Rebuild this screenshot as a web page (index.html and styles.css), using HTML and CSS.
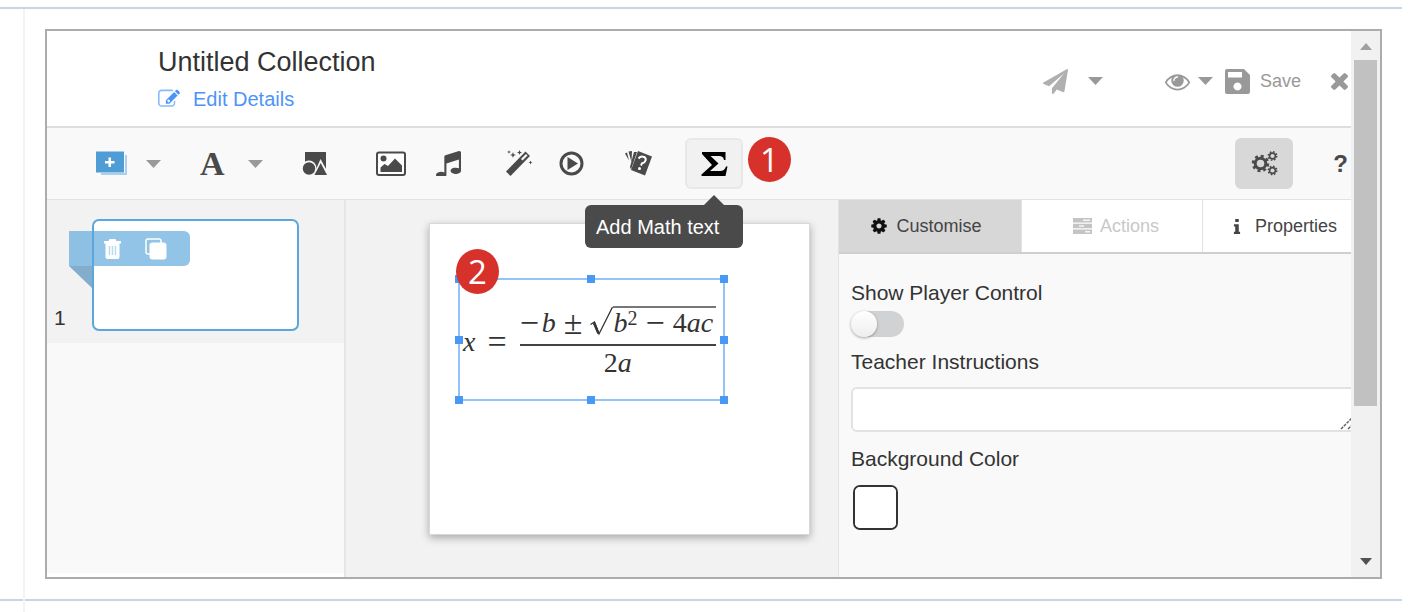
FILE: index.html
```html
<!DOCTYPE html>
<html lang="en">
<head>
<meta charset="utf-8">
<title>Untitled Collection</title>
<link rel="stylesheet" href="styles.css">
</head>
<body>
<svg class="symbols" aria-hidden="true">
  <symbol id="caret" viewBox="0 0 15 8"><path d="M0 0h15L7.500 8z"/></symbol>
  <symbol id="cog" viewBox="0 0 1792 1792"><path d="M1152 896q0-106-75-181t-181-75-181 75-75 181 75 181 181 75 181-75 75-181zm512-109v222q0 12-8 23t-20 13l-185 28q-19 54-39 91 35 50 107 138 10 12 10 25t-9 23q-27 37-99 108t-94 71q-12 0-26-9l-138-108q-44 23-91 38-16 136-29 186-7 28-36 28h-222q-14 0-24.500-8.500t-11.500-21.500l-28-184q-49-16-90-37l-141 107q-10 9-25 9-14 0-25-11-126-114-165-168-7-10-7-23 0-12 8-23 15-21 51-66.500t54-70.500q-27-50-41-99l-183-27q-13-2-21-12.500t-8-23.500v-222q0-12 8-23t19-13l186-28q14-46 39-92-40-57-107-138-10-12-10-24 0-10 9-23 26-36 98.500-107.500t94.500-71.500q13 0 26 10l138 107q44-23 91-38 16-136 29-186 7-28 36-28h222q14 0 24.500 8.500t11.500 21.500l28 184q49 16 90 37l142-107q9-9 24-9 13 0 25 10 129 119 165 170 7 8 7 22 0 12-8 23-15 21-51 66.500t-54 70.500q26 50 41 98l183 28q13 2 21 12.500t8 23.500z"/></symbol>
</svg>

<main class="row">
  <div class="gutter"></div>
  <section class="frame">
    <div class="app">
      <header class="header">
        <div class="heading">
          <h1 class="title">Untitled Collection</h1>
          <a class="edit" href="#">
            <svg width="22" height="22" viewBox="0 0 1792 1792"><path opacity=".65" d="M1408 1058v190q0 119-84.500 203.500t-203.500 84.500h-832q-119 0-203.500-84.500t-84.500-203.500v-832q0-119 84.500-203.500t203.500-84.500h832q63 0 117 25 15 7 18 23 3 17-9 29l-49 49q-14 14-32 8-23-6-45-6h-832q-66 0-113 47t-47 113v832q0 66 47 113t113 47h832q66 0 113-47t47-113v-126q0-13 9-22l64-64q15-15 35-7t20 29z"/><path d="M888 1184l116-116-152-152-116 116v56h96v96h56zM1312 320l288 288-672 672h-288v-288zm444 132l-92 92-288-288 92-92q28-28 68-28t68 28l152 152q28 28 28 68t-28 68z"/></svg>
            <span>Edit Details</span>
          </a>
        </div>
        <div class="actions">
          <button class="plain share" aria-label="Share">
            <svg class="light" width="25" height="25" viewBox="0 0 1792 1792"><path d="M1764 11q33 24 27 64l-256 1536q-5 29-32 45-14 8-31 8-11 0-24-5l-453-185-242 295q-18 23-49 23-13 0-22-4-19-7-30.500-23.500t-11.500-36.500v-349l864-1059-1069 925-395-162q-37-14-40-55-2-40 32-59l1664-960q15-9 32-9 20 0 36 11z"/></svg>
            <svg width="15" height="8"><use href="#caret"/></svg>
          </button>
          <button class="plain preview" aria-label="Preview">
            <svg width="25" height="25" viewBox="0 0 1792 1792"><path d="M1664 960q-152-236-381-353 61 104 61 225 0 185-131.500 316.500t-316.500 131.500-316.500-131.500-131.500-316.500q0-121 61-225-229 117-381 353 133 205 333.500 326.500t434.500 121.500 434.500-121.500 333.500-326.500zm-720-384q0-20-14-34t-34-14q-125 0-214.500 89.500t-89.500 214.500q0 20 14 34t34 14 34-14 14-34q0-86 61-147t147-61q20 0 34-14t14-34zm848 384q0 34-20 69-140 230-376.500 368.500t-499.500 138.500-499.500-139-376.500-368q-20-35-20-69t20-69q140-229 376.500-368t499.500-139 499.500 139 376.500 368q20 35 20 69z"/></svg>
            <svg width="15" height="8"><use href="#caret"/></svg>
          </button>
          <button class="plain save">
            <svg width="25" height="25" viewBox="0 0 25 25"><path fill-rule="evenodd" d="M2 0h17l6 6v17a2 2 0 0 1-2 2H2a2 2 0 0 1-2-2V2a2 2 0 0 1 2-2zM3 3v5.500h14V3zM12.500 13.500a4 4 0 1 0 .01 0z"/></svg>
            <span>Save</span>
          </button>
          <button class="plain" aria-label="Close">
            <svg width="17" height="17" viewBox="302 366 1188 1188"><path d="M1490 1322q0 40-28 68l-136 136q-28 28-68 28t-68-28l-294-294-294 294q-28 28-68 28t-68-28l-136-136q-28-28-28-68t28-68l294-294-294-294q-28-28-28-68t28-68l136-136q28-28 68-28t68 28l294 294 294-294q28-28 68-28t68 28l136 136q28 28 28 68t-28 68l-294 294 294 294q28 28 28 68z"/></svg>
          </button>
        </div>
      </header>

      <nav class="toolbar" aria-label="Insert">
        <button class="plain tool add" aria-label="Add page">
          <svg width="32" height="25" viewBox="0 0 32 25"><path fill="#a9d1ee" d="M5 4h26v20H5z"/><path fill="#f9f9f9" d="M3 2h26v20H3z"/><path fill="#509dd5" d="M0 .500h28v21H0z"/><path fill="#fff" d="M12.500 6.500h2.500v3.500h3.500v2.500H15V16h-2.500v-3.500H9V10h3.500z"/></svg>
          <svg class="grey" width="15" height="8"><use href="#caret"/></svg>
        </button>
        <button class="plain tool letter" aria-label="Add text">
          <span>A</span>
          <svg class="grey" width="15" height="8"><use href="#caret"/></svg>
        </button>
        <button class="plain tool" aria-label="Add shape">
          <svg width="26" height="24" viewBox="0 0 26 24"><path d="M3 0h21v22H3z"/><circle cx="7" cy="16" r="7.500" fill="#f9f9f9"/><path fill="#f9f9f9" d="M18.500 7L28 24H11z"/><circle cx="7" cy="16.500" r="6.200"/><path d="M18.700 11l6.300 12H12.500z"/></svg>
        </button>
        <button class="plain tool" aria-label="Add image">
          <svg width="31" height="26" viewBox="0 0 31 26"><rect x="1" y="1.500" width="28" height="22.500" rx="2" fill="#fff" stroke="#4a4a4a" stroke-width="2"/><circle cx="7.500" cy="7.500" r="3"/><path d="M4.500 21v-4.500l4-3.500 3.500 2 7-7.500 7 7v6.500z"/></svg>
        </button>
        <button class="plain tool" aria-label="Add audio">
          <svg width="25" height="25" viewBox="128 128 1536 1536"><path d="M1664 224v1120q0 50-34 89t-86 60.500-103.500 32-96.500 10.500-96.500-10.500-103.500-32-86-60.500-34-89 34-89 86-60.500 103.500-32 96.500-10.500q105 0 192 39v-537l-768 237v709q0 50-34 89t-86 60.500-103.500 32-96.500 10.500-96.500-10.500-103.500-32-86-60.500-34-89 34-89 86-60.500 103.500-32 96.500-10.500q105 0 192 39v-967q0-31 19-56t49-35l832-256q12-4 28-4 40 0 68 28t28 68z"/></svg>
        </button>
        <button class="plain tool" aria-label="Add effect">
          <svg width="27" height="27" viewBox="0 0 27 27"><path d="M0 21.500L19.500 1.500l4.500 4.500L4.500 26z"/><path fill="#f9f9f9" d="M15 9l5-5 1.500 1.500-5 5z"/><path d="M7 2l.8 2.200L10 5l-2.200.8L7 8l-.8-2.200L4 5l2.200-.8zM13.500 0l.7 1.800 1.800.7-1.800.7-.7 1.800-.7-1.800-1.800-.7 1.800-.7zM3 0l.5 1.500L5 2l-1.500.5L3 4l-.5-1.500L1 2l1.500-.5zM24.500 10.500l.6 1.400 1.400.6-1.400.6-.6 1.400-.6-1.400-1.400-.6 1.400-.6z"/></svg>
        </button>
        <button class="plain tool" aria-label="Add video">
          <svg width="25" height="25" viewBox="0 0 25 25"><circle cx="12.500" cy="12.500" r="10.500" fill="none" stroke="#4a4a4a" stroke-width="3"/><path d="M8.500 6l10.500 6.500L8.500 19z"/></svg>
        </button>
        <button class="plain tool" aria-label="Add flashcards">
          <svg width="29" height="27" viewBox="0 0 29 27"><path d="M0 3.500L2 2.500l2 8zM3.500 1.500L7 1l-.5 11zM9 2h3L6 19.500 5 17z"/><path d="M13 1l14 5.500-7 19L6 20z"/><path d="M13.500 8.500q2.500-3 5.500-1.500t1 4.500q-1 1.500-3 1.800l-1 2.200" fill="none" stroke="#fff" stroke-width="2"/><circle cx="14.500" cy="18.500" r="1.500" fill="#fff"/></svg>
        </button>
        <div class="math">
          <button class="boxed sigma" aria-label="Add Math text">
            <svg width="27" height="26" viewBox="0 0 27 26"><path d="M1 1h23.500v8H23q-.5-4-5-4H9.500l8 7.500L9 20h10q4.500 0 6-4.500h1.500L24.500 25H.5v-1.500L11 14 1 3z"/></svg>
          </button>
          <span class="badge badge-one">1</span>
          <div class="tooltip" role="tooltip">Add Math text</div>
        </div>
        <button class="boxed settings" aria-label="Settings">
          <svg class="gears" width="27" height="25" viewBox="0 0 27 25"><circle cx="9.500" cy="12.500" r="5.300" stroke-width="3"/><circle cx="9.500" cy="12.500" r="7.500" stroke-width="2.500" stroke-dasharray="3 2.890"/><circle cx="21.500" cy="5" r="2.900" stroke-width="1.600"/><circle cx="21.500" cy="5" r="4.200" stroke-width="1.500" stroke-dasharray="1.600 1.700"/><circle cx="21.500" cy="19.500" r="2.900" stroke-width="1.600"/><circle cx="21.500" cy="19.500" r="4.200" stroke-width="1.500" stroke-dasharray="1.600 1.700"/></svg>
        </button>
        <button class="plain help" aria-label="Help">?</button>
      </nav>

      <div class="body">
        <aside class="pages">
          <div class="page">
            <span class="number">1</span>
            <div class="thumb">
              <div class="ribbon">
                <button class="plain" aria-label="Delete page"><svg width="17" height="20" viewBox="0 0 17 20"><path fill="#fff" fill-rule="evenodd" d="M5.500 0h6l1 2H17v2.500h-1.500V18a2 2 0 0 1-2 2h-10a2 2 0 0 1-2-2V4.500H0V2h4.500z"/><path stroke="#b9d9ef" stroke-width="1.500" d="M5.500 7v9M8.500 7v9M11.500 7v9"/></svg></button>
                <button class="plain" aria-label="Duplicate page"><svg width="22" height="22" viewBox="0 0 22 22"><rect x="1" y="1" width="15" height="15" rx="2" fill="none" stroke="#fff" stroke-width="1.500"/><rect x="4.500" y="4.500" width="17" height="17" rx="3" fill="#fff"/></svg></button>
              </div>
              <svg class="fold" width="23" height="22" viewBox="0 0 23 22"><path d="M0 0h23v22z"/></svg>
            </div>
          </div>
          <div class="rest"></div>
        </aside>

        <section class="canvas">
          <div class="slide">
            <div class="formula">
              <span class="var">x</span><span class="equals">=</span>
              <div class="fraction">
                <div class="top">
                  <span class="sign">−</span><i>b</i><span class="op">±</span>
                  <svg width="23" height="32" viewBox="0 0 23 32"><path fill="none" stroke="#333" stroke-width="1.300" d="M.5 18.500l4-2.500 4.500 12L22.500 1"/><path fill="none" stroke="#333" stroke-width="2.500" d="M4 17l4.500 10.500"/></svg>
                  <div class="root"><i>b</i><sup>2</sup><span class="op">−</span><span>4</span><i>ac</i></div>
                </div>
                <div class="bottom">2<i>a</i></div>
              </div>
              <b class="handle n w"></b><b class="handle n c"></b><b class="handle n e"></b>
              <b class="handle m w"></b><b class="handle m e"></b>
              <b class="handle s w"></b><b class="handle s c"></b><b class="handle s e"></b>
              <span class="badge badge-two">2</span>
            </div>
          </div>
        </section>

        <aside class="panel">
          <div class="tabs" role="tablist">
            <button class="tab active" role="tab" aria-selected="true"><svg width="18" height="18"><use href="#cog"/></svg>Customise</button>
            <button class="tab muted" role="tab" disabled><svg width="19" height="16" viewBox="0 0 19 16"><path fill="#c4c4c4" d="M0 0h19v4.500H0zM0 5.750h19v4.500H0zM0 11.500h19V16H0z"/><path stroke="#f5f5f5" stroke-width="1.500" d="M10 2.250h7M6 8h5M12 13.750h5"/></svg>Actions</button>
            <button class="tab last" role="tab"><svg width="8" height="15" viewBox="0 0 8 17"><path d="M2 0h4v3.500H2zM.500 6H6v8.500h1.500V17H.500v-2.500H2v-6H.500z"/></svg>Properties</button>
          </div>
          <form class="fields">
            <label for="player">Show Player Control</label>
            <input class="switch" id="player" type="checkbox" role="switch">
            <label for="instructions">Teacher Instructions</label>
            <div class="area">
              <textarea id="instructions"></textarea>
              <svg width="16" height="16" viewBox="0 0 16 16"><path stroke="#666" stroke-width="1.500" d="M1 14L13 2M8 14l6-6" stroke-dasharray="3 1"/></svg>
            </div>
            <label for="background">Background Color</label>
            <input class="swatch" id="background" type="color" value="#ffffff">
          </form>
        </aside>
      </div>
    </div>

    <div class="scroll" aria-hidden="true">
      <svg width="12" height="7" viewBox="0 0 12 7"><path fill="#a0a0a0" d="M0 7h12L6 0z"/></svg>
      <div class="track"><div class="grip"></div></div>
      <svg width="12" height="7" viewBox="0 0 12 7"><path fill="#505050" d="M0 0h12L6 7z"/></svg>
    </div>
  </section>
</main>
</body>
</html>
```

FILE: styles.css
```css
* { box-sizing: border-box; }

body {
  margin: 0;
  padding-top: 7px;
  background: #fff;
  color: #333;
  font: 21px/26px "Liberation Sans", Arial, sans-serif;
}

button { font: inherit; color: inherit; }
svg { display: block; flex: none; fill: currentColor; }
.symbols { position: absolute; width: 0; height: 0; }

/* Page row around the application */
.row {
  display: flex;
  margin-right: 26px;
  border-top: 2px solid #c9d5e3;
  position: relative;
}
.row::after {
  content: "";
  position: absolute;
  left: 0;
  right: 0;
  bottom: 11px;
  height: 2px;
  background: #c9d5e3;
}
.gutter {
  width: 25px;
  border-right: 2px solid #f3f3f5;
  position: relative;
  z-index: 1;
}
.frame {
  flex: 1;
  min-width: 0;
  display: flex;
  margin: 20px 20px 33px;
  border: 2px solid #acacac;
}
.app { flex: 1; min-width: 0; display: flex; flex-direction: column; }

.plain {
  display: flex;
  align-items: center;
  padding: 0;
  border: 0;
  background: none;
}

/* Header */
.header {
  display: flex;
  justify-content: space-between;
  align-items: center;
  padding: 14px 3px 15px 111px;
  border-bottom: 2px solid #dedede;
}
.heading { display: flex; flex-direction: column; gap: 8px; }
.title { margin: 0; font-size: 27px; line-height: 34px; font-weight: 400; }
.edit {
  display: flex;
  align-items: center;
  gap: 13px;
  color: #4d94f8;
  font-size: 20px;
  line-height: 24px;
  text-decoration: none;
}
.actions { display: flex; align-items: center; padding-top: 6px; color: #999; font-size: 18px; }
.light { color: #b0b0b0; }
.share { gap: 20px; margin-right: 62px; }
.preview { gap: 8px; margin-right: 12px; }
.save { gap: 10px; margin-right: 30px; }

/* Toolbar */
.toolbar {
  display: grid;
  grid-template-columns: 104px 102px 74px 60px 70px 53px 66px 60px 58px 1fr 42px;
  align-items: center;
  padding: 10px 0 10px 49px;
  border-bottom: 1px solid #e2e2e2;
  background: #f9f9f9;
  color: #4a4a4a;
}
.grey { color: #999; }
.add { gap: 18px; }
.letter { gap: 23px; font: bold 34px/34px "Liberation Serif", "Times New Roman", serif; }
.boxed {
  display: flex;
  align-items: center;
  justify-content: center;
  width: 58px;
  height: 51px;
  padding: 0;
  border: 2px solid #e8e8e8;
  border-radius: 6px;
  background: #f1f1f1;
}
.sigma { color: #000; }
.settings { justify-self: end; margin-right: 16px; border-color: #d8d8d8; background: #d8d8d8; }
.gears { fill: none; stroke: #4a4a4a; }
.help { font-size: 24px; font-weight: 700; justify-self: end; padding-right: 3px; }
.math { position: relative; }
.badge {
  position: absolute;
  z-index: 3;
  display: flex;
  align-items: center;
  justify-content: center;
  width: 43px;
  height: 45px;
  border-radius: 50%;
  background: #d6322b;
  color: #fff;
  font: 33px/45px "Open Sans", sans-serif;
}
.badge-one { left: 63px; top: -1px; }
.badge-two { left: -4px; top: -31px; }
.tooltip {
  position: absolute;
  z-index: 2;
  right: 0;
  top: 67px;
  width: 158px;
  padding: 9px 11px 8px;
  border-radius: 6px;
  background: #4a4a4a;
  color: #fff;
  font-size: 20px;
  white-space: nowrap;
}
.tooltip::before {
  content: "";
  position: absolute;
  right: 19px;
  bottom: 100%;
  border: 10px solid transparent;
  border-top: 0;
  border-bottom-color: #4a4a4a;
}

/* Page list */
.body {
  flex: 1;
  display: grid;
  grid-template-columns: 299px minmax(0, 492fr) minmax(0, 513fr);
  background: #f2f2f2;
}
.pages {
  display: flex;
  flex-direction: column;
  padding-bottom: 4px;
  border-right: 2px solid #e6e6e6;
  background: #fff;
}
.page {
  display: flex;
  gap: 26px;
  padding: 19px 45px 12px 7px;
  background: #f2f2f2;
}
.number { width: 12px; align-self: flex-end; }
.thumb {
  position: relative;
  flex: 1;
  height: 112px;
  border: 2px solid #5ba7db;
  border-radius: 7px;
  background: #fff;
}
.ribbon {
  position: absolute;
  left: -25px;
  top: 10px;
  display: flex;
  align-items: center;
  gap: 24px;
  width: 121px;
  height: 35px;
  padding-left: 35px;
  border-radius: 0 6px 6px 0;
  background: #5ba7dbaa;
}
.fold { position: absolute; left: -25px; top: 45px; color: #82adcc; }
.rest { flex: 1; background: #f9f9f9; }

/* Canvas */
.canvas { padding: 23px 28px 42px 83px; }
.slide {
  position: relative;
  aspect-ratio: 381 / 312;
  border: 1px solid #d8d8d8;
  background: #fff;
  box-shadow: 0 3px 8px #0000004d;
}
.formula {
  position: absolute;
  left: 28px;
  top: 54px;
  display: flex;
  align-items: flex-start;
  width: 267px;
  height: 123px;
  padding: 26px 7px 0 3px;
  border: 2px solid #91c4fa;
  font: 28px/30px "Liberation Serif", "Times New Roman", serif;
}
.var { padding-top: 21px; font-style: italic; }
.equals { padding: 21px 13px 0 12px; }
.fraction { flex: 1; text-align: center; }
.top {
  display: flex;
  padding-bottom: 6px;
  border-bottom: 2px solid #444;
}
.equals, .sign, .op { font-size: 34px; }
.top > span, .top > i { padding-top: 2px; }
.top .sign { padding-right: 3px; }
.top .op { padding-left: 8px; padding-right: 8px; }
.root { flex: 1; display: flex; border-top: 2px solid #777; }
.root sup { font-size: 20px; line-height: 20px; }
.bottom { padding-top: 2px; }
.handle { position: absolute; width: 8px; height: 8px; background: #4998f4; }
.n { top: -5px; }
.m { top: 56px; }
.s { bottom: -5px; }
.w { left: -5px; }
.c { left: 127px; }
.e { right: -5px; }

/* Properties panel */
.panel {
  overflow: hidden;
  border-left: 1px solid #e2e2e2;
  background: #f9f9f9;
}
.tabs {
  display: grid;
  grid-template-columns: 183px 181px 1fr;
  border-bottom: 2px solid #cfcfcf;
}
.tab {
  display: flex;
  align-items: center;
  justify-content: center;
  gap: 8px;
  height: 52px;
  padding: 0;
  border: 0;
  border-right: 1px solid #e2e2e2;
  background: #fff;
  font-size: 18px;
  color: #444;
}
.active { padding-right: 8px; background: #d7d7d7; }
.active svg { color: #111; }
.muted { padding-left: 8px; color: #c8c8c8; }
.last { justify-content: flex-start; gap: 14px; padding-left: 30px; border-right: 0; }
.fields {
  display: flex;
  flex-direction: column;
  align-items: flex-start;
  padding: 26px 0 0 12px;
}
.switch {
  appearance: none;
  width: 53px;
  height: 26px;
  margin: 5px 0 12px;
  border-radius: 13px;
  background: #d0d2d4;
}
.switch::before {
  content: "";
  display: block;
  width: 26px;
  height: 26px;
  border-radius: 50%;
  background: linear-gradient(#fff, #eee);
  box-shadow: 0 1px 3px #00000059;
}
.area { align-self: stretch; position: relative; margin: 12px -8px 14px 0; }
.area textarea {
  display: block;
  width: 100%;
  height: 45px;
  padding: 8px;
  border: 2px solid #e2e2e2;
  border-radius: 6px;
  resize: none;
  font: inherit;
}
.area svg { position: absolute; right: 3px; bottom: 1px; }
.swatch {
  appearance: none;
  width: 45px;
  height: 45px;
  margin: 13px 2px 0;
  padding: 0;
  border: 2px solid #333;
  border-radius: 7px;
  background: #fff;
  overflow: hidden;
}
.swatch::-webkit-color-swatch-wrapper { padding: 0; }
.swatch::-webkit-color-swatch { border: 0; }

/* Scrollbar */
.scroll {
  flex: 0 0 29px;
  display: flex;
  flex-direction: column;
  align-items: center;
  gap: 10px;
  padding: 12px 0;
  background: #f1f1f1;
}
.track { flex: 1; width: 23px; }
.grip { height: 71%; background: #c1c1c1; }
```
